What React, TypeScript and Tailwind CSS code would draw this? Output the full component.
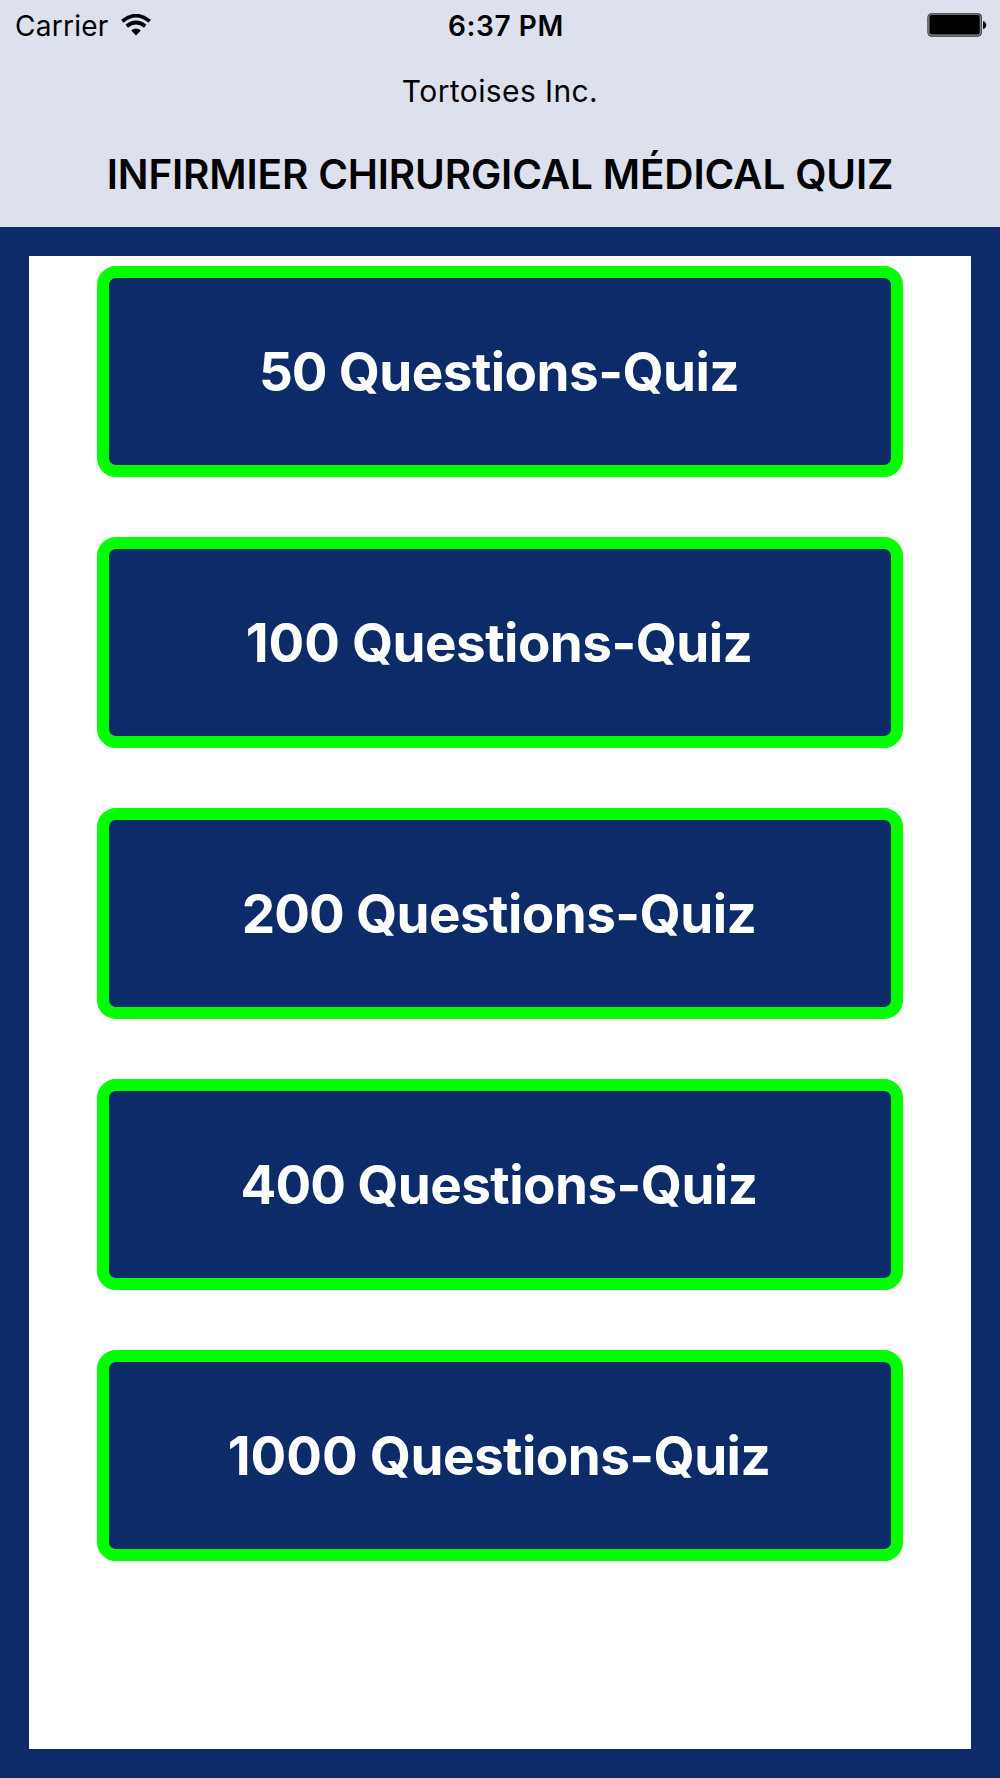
const quizzes = [
  { count: 50, digits: "tracking-[-0.9px]" },
  { count: 100, digits: "tracking-normal" },
  { count: 200, digits: "tracking-[-0.9px]" },
  { count: 400, digits: "tracking-[-0.9px]" },
  { count: 1000, digits: "tracking-normal" },
];

function Wifi() {
  return (
    <svg className="ml-[12px] h-[22px] w-[30px] shrink-0" viewBox="0 0 30 22">
      <path d="M1.3 7.2Q15 -4 28.7 7.2" fill="none" stroke="#000" strokeWidth="3.7" />
      <path d="M5.8 12.2Q15 4.8 24.2 12.2" fill="none" stroke="#000" strokeWidth="3.7" />
      <path d="M10.2 16.5Q15 12.7 19.8 16.5L15 21.5Z" fill="#000" />
    </svg>
  );
}

function Battery() {
  return (
    <svg className="h-[24px] w-[60px]" viewBox="0 0 60 24">
      <rect x="0.9" y="0.9" width="53.4" height="22.2" rx="3.5" fill="#a5a7af" stroke="#333438" strokeWidth="1.1" />
      <rect x="2.4" y="2" width="50.4" height="19.6" rx="1.8" />
      <path d="M56 8Q59.3 9 59.3 12T56 16Z" />
    </svg>
  );
}

export default function App() {
  return (
    <main className="flex h-[1778px] w-[1000px] flex-col overflow-hidden bg-[#0d2b69] font-['Inter',sans-serif]">
      <header className="h-[227px] shrink-0 bg-[#dde1ee] text-black">
        <div className="grid h-[50px] grid-cols-3 items-center">
          <div className="flex items-center pl-[15px]">
            <span className="pt-[2px] text-[28px] leading-none tracking-[0.25px]">Carrier</span>
            <Wifi />
          </div>
          <div className="pl-[12px] pt-[2px] text-center text-[28px] font-semibold leading-none tracking-[0.6px]">6:37 PM</div>
          <div className="flex justify-end pr-[13px]"><Battery /></div>
        </div>
        <p className="mt-[21px] text-center text-[30px] leading-[40px] tracking-[0.4px]">Tortoises Inc.</p>
        <h1 className="mt-[39px] whitespace-nowrap text-center text-[40.5px] font-semibold leading-[50px] tracking-[-0.18px]">INFIRMIER CHIRURGICAL MÉDICAL QUIZ</h1>
      </header>
      <section className="mx-[29px] mt-[29px] flex h-[1493px] flex-col items-center gap-[60px] bg-white pt-[10px]">
        {quizzes.map(({ count, digits }) => (
          <button key={count} className="h-[211px] w-[806px] shrink-0 rounded-[19px] border-[12px] border-[#00ff00] bg-[#0d2b69] pr-[2px] pt-[3px] text-center text-[53px] font-bold tracking-[-0.55px] text-white">
            <span className={digits}>{count}</span> Questions-Quiz
          </button>
        ))}
      </section>
    </main>
  );
}
